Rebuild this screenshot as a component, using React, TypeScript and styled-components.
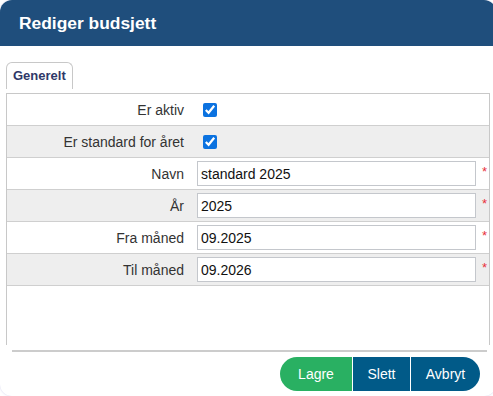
import React from 'react'
import styled, {createGlobalStyle} from 'styled-components'

// Global Style.
const GlobalStyle = createGlobalStyle`
  html, body {
    margin: 0;
    padding: 0;
    background: #fff;
    overflow: hidden;
  }

  body {
    font-family: "Liberation Sans", Arial, sans-serif;
  }
`

// Dialog.
const Dialog = styled.div`
  background: #fff;
  border-radius: 12px;
  box-shadow: 0 0 2px rgba(120, 120, 200, .35);
  box-sizing: border-box;
  display: flex;
  flex-direction: column;
  height: 396px;
  overflow: hidden;
  width: 496px;
`

const Header = styled.div`
  align-items: center;
  background: #1f4e7c;
  color: #fff;
  display: flex;
  flex: none;
  font-size: 17.4px;
  font-weight: bold;
  height: 46px;
  padding-left: 19px;
`

const Body = styled.div`
  display: flex;
  flex: 1;
  flex-direction: column;
  padding: 16px 6px 0 6px;
  width: 484px;
`

// Tabs.
const TabBar = styled.div`
  display: flex;
  margin-bottom: 4px;
`

const Tab = styled.div`
  border: 1px solid #c8c8c8;
  border-bottom: none;
  border-radius: 6px 6px 0 0;
  box-sizing: border-box;
  color: #2f3868;
  font-size: 13px;
  font-weight: bold;
  height: 27px;
  line-height: 25px;
  padding: 0 6px;
`

// Panel.
const Panel = styled.div`
  border: 1px solid #c8c8c8;
  border-bottom: none;
  height: 251px;
`

const Row = styled.div<{$shaded?: boolean}>`
  align-items: center;
  background: ${p => p.$shaded ? '#eeeeee' : '#fff'};
  border-bottom: 1px solid #cfcfcf;
  display: grid;
  grid-template-columns: 183px 1fr;
  height: 31px;
`

const Label = styled.div`
  color: #333;
  font-size: 14px;
  padding-right: 6px;
  text-align: right;
`

const Value = styled.div`
  align-items: center;
  display: flex;
  padding-left: 7px;
`

const Checkbox = styled.input.attrs({type: 'checkbox'})`
  accent-color: #0b72e0;
  height: 14px;
  margin: 0 0 0 6px;
  width: 14px;
`

const TextInput = styled.input.attrs({type: 'text'})`
  border: 1px solid #c4c7cc;
  box-sizing: border-box;
  color: #111;
  font-family: "Liberation Sans", Arial, sans-serif;
  font-size: 14px;
  height: 25px;
  outline: none;
  padding: 0 3px;
  width: 279px;
`

const Required = styled.span`
  align-self: flex-start;
  color: #e8303a;
  font-size: 13px;
  margin-left: 6px;
  margin-top: 3px;
`

// Footer.
const Footer = styled.div`
  border-top: 2px solid #cccccc;
  display: flex;
  justify-content: flex-end;
  margin: 5px 3px 0 6px;
  padding: 5px 7px 0 0;
`

const ButtonGroup = styled.div`
  border-radius: 17px;
  display: flex;
  overflow: hidden;
`

const Button = styled.button<{$primary?: boolean, $width: number}>`
  background: ${p => p.$primary ? '#29b062' : '#015a88'};
  border: none;
  border-left: ${p => p.$primary ? 'none' : '1px solid #fff'};
  box-sizing: border-box;
  color: #fff;
  font-family: "Liberation Sans", Arial, sans-serif;
  font-size: 14px;
  height: 34px;
  padding: 0;
  width: ${p => p.$width}px;
`

// Fields.
const fields = [
  {label: 'Navn', value: 'standard 2025'},
  {label: 'År', value: '2025'},
  {label: 'Fra måned', value: '09.2025'},
  {label: 'Til måned', value: '09.2026'},
]

// App.
export default function App() {
  return <>
    <GlobalStyle/>

    <Dialog>

      {/* Header. */}
      <Header>Rediger budsjett</Header>

      <Body>

        {/* Tabs. */}
        <TabBar>
          <Tab>Generelt</Tab>
        </TabBar>

        {/* Form. */}
        <Panel>
          <Row>
            <Label>Er aktiv</Label>
            <Value><Checkbox defaultChecked/></Value>
          </Row>
          <Row $shaded>
            <Label>Er standard for året</Label>
            <Value><Checkbox defaultChecked/></Value>
          </Row>
          {fields.map((field, i) => <Row key={field.label} $shaded={i % 2 === 1}>
            <Label>{field.label}</Label>
            <Value>
              <TextInput defaultValue={field.value}/>
              <Required>*</Required>
            </Value>
          </Row>)}
        </Panel>

        {/* Buttons. */}
        <Footer>
          <ButtonGroup>
            <Button $primary $width={72}>Lagre</Button>
            <Button $width={58}>Slett</Button>
            <Button $width={70}>Avbryt</Button>
          </ButtonGroup>
        </Footer>

      </Body>

    </Dialog>
  </>
}
